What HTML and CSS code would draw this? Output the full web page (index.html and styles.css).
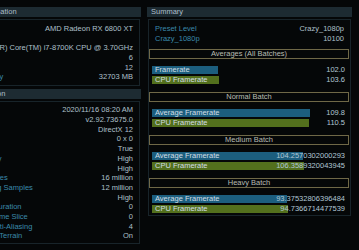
FILE: index.html
```html
<!DOCTYPE html>
<html lang="en">
<head>
  <meta charset="UTF-8">
  <title>Benchmark Results</title>
  <link rel="stylesheet" href="styles.css">
</head>
<body>
  <div class="page">

    <!-- left column: system + run info -->
    <div class="left-col">
      <div class="panel">
        <div class="panel-header">System Information</div>
        <div class="panel-body info-list">
          <div class="info-row"><span class="label">GPU</span><span class="value">AMD Radeon RX 6800 XT</span></div>
          <div class="info-row"><span class="label">Driver</span><span class="value"></span></div>
          <div class="info-row"><span class="label">CPU</span><span class="value">Intel(R) Core(TM) i7-8700K CPU @ 3.70GHz</span></div>
          <div class="info-row"><span class="label">CPU Cores</span><span class="value">6</span></div>
          <div class="info-row"><span class="label">CPU Threads</span><span class="value">12</span></div>
          <div class="info-row"><span class="label">System Memory</span><span class="value">32703 MB</span></div>
        </div>
      </div>

      <div class="panel panel-second">
        <div class="panel-header">Run Information</div>
        <div class="panel-body info-list info-list-long">
          <div class="info-row"><span class="label">Date</span><span class="value">2020/11/16 08:20 AM</span></div>
          <div class="info-row"><span class="label">Version</span><span class="value">v2.92.73675.0</span></div>
          <div class="info-row"><span class="label">API</span><span class="value">DirectX 12</span></div>
          <div class="info-row"><span class="label">Resolution</span><span class="value">0 x 0</span></div>
          <div class="info-row"><span class="label">Fullscreen</span><span class="value">True</span></div>
          <div class="info-row"><span class="label">Shadow Quality</span><span class="value">High</span></div>
          <div class="info-row"><span class="label">Light Quality</span><span class="value">High</span></div>
          <div class="info-row"><span class="label">Shading Samples</span><span class="value">16 million</span></div>
          <div class="info-row"><span class="label">Terrain Shading Samples</span><span class="value">12 million</span></div>
          <div class="info-row"><span class="label">Glare Quality</span><span class="value">High</span></div>
          <div class="info-row"><span class="label">Temporal AA Duration</span><span class="value">0</span></div>
          <div class="info-row"><span class="label">Temporal AA Time Slice</span><span class="value">0</span></div>
          <div class="info-row"><span class="label">Multisample Anti-Aliasing</span><span class="value">4</span></div>
          <div class="info-row"><span class="label">Half-resolution Terrain</span><span class="value">On</span></div>
        </div>
      </div>
    </div>

    <!-- right column: summary -->
    <div class="right-col">
      <div class="panel">
        <div class="panel-header summary-header">Summary</div>
        <div class="panel-body">
          <div class="summary-list">
            <div class="summary-row"><span class="label">Preset Level</span><span class="value">Crazy_1080p</span></div>
            <div class="summary-row"><span class="label">Crazy_1080p</span><span class="value">10100</span></div>
          </div>

          <div class="batch">
            <div class="batch-title">Averages (All Batches)</div>
            <div class="bars">
              <div class="bar-row"><div class="bar bar-blue" style="width: 66px">Framerate</div><span class="bar-num">102.0</span></div>
              <div class="bar-row"><div class="bar bar-green" style="width: 67px">CPU Framerate</div><span class="bar-num">103.6</span></div>
            </div>
          </div>

          <div class="batch">
            <div class="batch-title">Normal Batch</div>
            <div class="bars">
              <div class="bar-row"><div class="bar bar-blue" style="width: 158px">Average Framerate</div><span class="bar-num">109.8</span></div>
              <div class="bar-row"><div class="bar bar-green" style="width: 157px">CPU Framerate</div><span class="bar-num">110.5</span></div>
            </div>
          </div>

          <div class="batch">
            <div class="batch-title">Medium Batch</div>
            <div class="bars">
              <div class="bar-row"><div class="bar bar-blue" style="width: 151px">Average Framerate</div><span class="bar-num">104.2570302000293</span></div>
              <div class="bar-row"><div class="bar bar-green" style="width: 152px">CPU Framerate</div><span class="bar-num">106.3589320043945</span></div>
            </div>
          </div>

          <div class="batch">
            <div class="batch-title">Heavy Batch</div>
            <div class="bars">
              <div class="bar-row"><div class="bar bar-blue" style="width: 135px">Average Framerate</div><span class="bar-num">93.37532806396484</span></div>
              <div class="bar-row"><div class="bar bar-green" style="width: 136px">CPU Framerate</div><span class="bar-num">94.7366714477539</span></div>
            </div>
          </div>
        </div>
      </div>
    </div>

  </div>
</body>
</html>
```

FILE: styles.css
```css
body {
  margin: 0;
  background: #050708;
  font-family: "Liberation Sans", Arial, sans-serif;
  font-size: 7.5px;
  overflow: hidden;
}

.page {
  display: flex;
  width: 359px;
  height: 250px;
  padding-top: 7px;
  box-sizing: border-box;
}

.left-col {
  flex-shrink: 0;
  width: 196px;
  margin-left: -55px;
}

.right-col {
  flex-shrink: 0;
  width: 205px;
  margin-left: 6px;
}

.panel-second {
  margin-top: 3.3px;
}

.panel-header {
  height: 10px;
  line-height: 10px;
  padding-left: 7px;
  background: #1d2b32;
  color: #adbfca;
  white-space: nowrap;
}

.summary-header {
  padding-left: 4px;
}

.panel-body {
  margin: 2px 1px 0;
  border: 1px solid #18242a;
}

.info-list {
  padding: 4px 6px 3px 2px;
}

.info-list-long {
  padding: 3px 6px 1.5px 2px;
}

.info-row {
  display: flex;
  height: 9.7px;
  line-height: 9.7px;
  white-space: nowrap;
}

.label {
  color: #3b89ab;
  margin-right: auto;
}

.value {
  color: #aec0cb;
}

.summary-list {
  padding: 4px 6px 5px 6px;
}

.summary-row {
  display: flex;
  height: 10px;
  line-height: 10px;
  white-space: nowrap;
}

.batch-title {
  height: 10px;
  margin-right: 1px;
  box-sizing: border-box;
  border: 1px solid #6f6847;
  line-height: 8px;
  text-align: center;
  color: #b8bcb2;
}

.bars {
  padding: 6.5px 5px 6.5px 3px;
}

.batch:last-child .bars {
  padding-bottom: 0;
}

.bar-row {
  display: grid;
  height: 10px;
}

.bar {
  grid-area: 1 / 1;
  height: 8.5px;
  line-height: 8.5px;
  padding-left: 3px;
  box-sizing: border-box;
  color: #d2dee6;
  white-space: nowrap;
}

.bar-blue {
  background: #1c5e7e;
}

.bar-green {
  background: #53701d;
}

.bar-num {
  grid-area: 1 / 1;
  justify-self: end;
  line-height: 8.5px;
  color: #b2c8d6;
  white-space: nowrap;
}
```
